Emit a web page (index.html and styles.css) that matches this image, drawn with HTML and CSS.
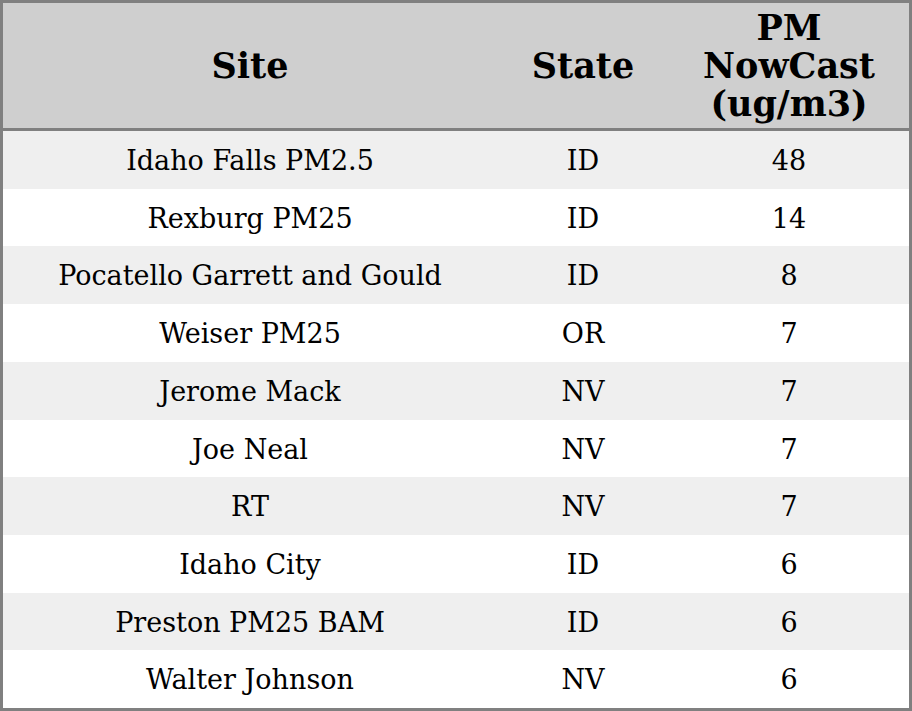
FILE: index.html
```html
<!DOCTYPE html>
<html>
<head>
<meta charset="utf-8">
<link rel="stylesheet" href="styles.css">
</head>
<body>
<table class="aq">
<colgroup><col class="c-site"><col class="c-state"><col class="c-pm"></colgroup>
<thead>
<tr><th>Site</th><th>State</th><th>PM<br>NowCast<br>(ug/m3)</th></tr>
</thead>
<tbody>
<tr><td>Idaho Falls PM2.5</td><td>ID</td><td>48</td></tr>
<tr><td>Rexburg PM25</td><td>ID</td><td>14</td></tr>
<tr><td>Pocatello Garrett and Gould</td><td>ID</td><td>8</td></tr>
<tr><td>Weiser PM25</td><td>OR</td><td>7</td></tr>
<tr><td>Jerome Mack</td><td>NV</td><td>7</td></tr>
<tr><td>Joe Neal</td><td>NV</td><td>7</td></tr>
<tr><td>RT</td><td>NV</td><td>7</td></tr>
<tr><td>Idaho City</td><td>ID</td><td>6</td></tr>
<tr><td>Preston PM25 BAM</td><td>ID</td><td>6</td></tr>
<tr><td>Walter Johnson</td><td>NV</td><td>6</td></tr>
</tbody>
</table>
</body>
</html>
```
FILE: styles.css
```css
html, body { margin: 0; padding: 0; background: #fff; }
.aq {
  width: 912px;
  border-collapse: separate;
  border-spacing: 0;
  table-layout: fixed;
  border: 3px solid #808080;
  font-family: "DejaVu Serif", serif;
  color: #000;
}
.c-site { width: 494px; }
.c-state { width: 172px; }
.c-pm { width: 240px; }
.aq th {
  background: #cfcfcf;
  font-size: 35px;
  font-weight: bold;
  line-height: 38px;
  height: 128px;
  box-sizing: border-box;
  padding: 0;
  text-align: center;
  vertical-align: middle;
  border-bottom: 3px solid #808080;
}
.aq td {
  font-size: 27px;
  line-height: 27.7px;
  padding: 16px 0 14px;
  text-align: center;
  height: 27.7px;
}
.aq tbody tr:nth-child(odd) td { background: #efefef; }
```
